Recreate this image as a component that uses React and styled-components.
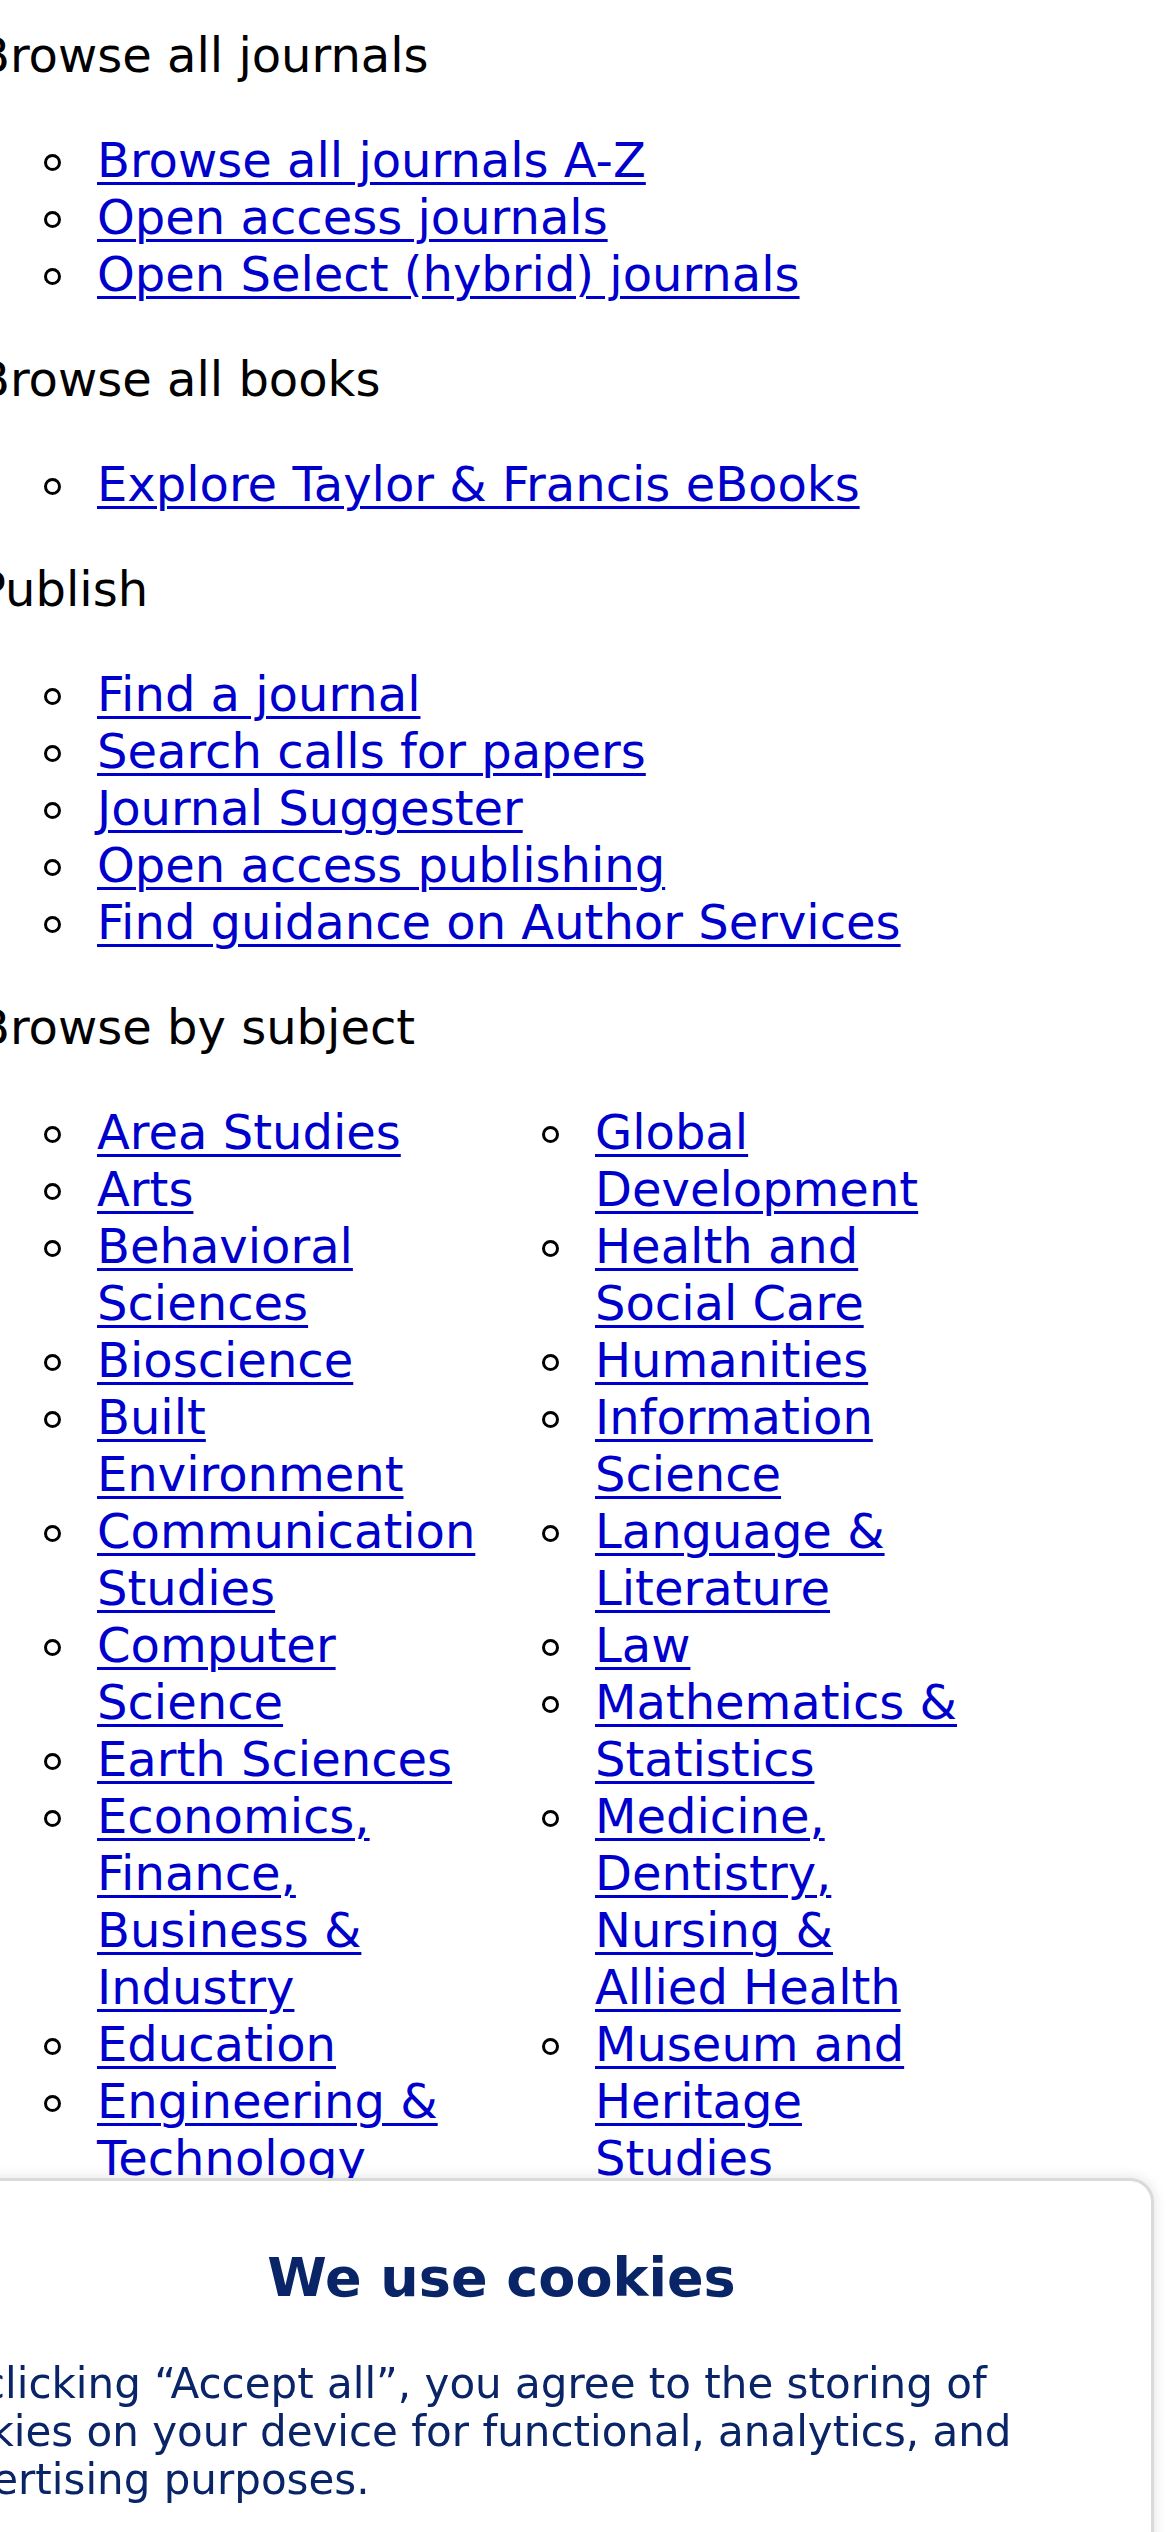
import React from "react";
import styled, { createGlobalStyle } from "styled-components";

const journalLinks = [
  "Browse all journals A-Z",
  "Open access journals",
  "Open Select (hybrid) journals",
];

const bookLinks = ["Explore Taylor & Francis eBooks"];

const publishLinks = [
  "Find a journal",
  "Search calls for papers",
  "Journal Suggester",
  "Open access publishing",
  "Find guidance on Author Services",
];

const subjectsLeft = [
  "Area Studies",
  "Arts",
  "Behavioral Sciences",
  "Bioscience",
  "Built Environment",
  "Communication Studies",
  "Computer Science",
  "Earth Sciences",
  "Economics, Finance, Business & Industry",
  "Education",
  "Engineering & Technology",
  "Environment & Agriculture",
  "Environment and Sustainability",
  "Food Science & Technology",
  "Geography",
];

const subjectsRight = [
  "Global Development",
  "Health and Social Care",
  "Humanities",
  "Information Science",
  "Language & Literature",
  "Law",
  "Mathematics & Statistics",
  "Medicine, Dentistry, Nursing & Allied Health",
  "Museum and Heritage Studies",
  "Physical Sciences",
  "Politics & International Relations",
  "Social Sciences",
  "Sports and Leisure",
  "Tourism, Hospitality and Events",
  "Urban Studies",
];

function App() {
  return (
    <>
      <GlobalStyle />
      <Viewport>
        <Page>
          <Section title="Browse all journals" links={journalLinks} />
          <Section title="Browse all books" links={bookLinks} />
          <Section title="Publish" links={publishLinks} />

          <SectionTitle>Browse by subject</SectionTitle>
          <SubjectColumns>
            <SubjectList>
              {subjectsLeft.map((s) => (
                <Item key={s}>
                  <Link href="#">{s}</Link>
                </Item>
              ))}
            </SubjectList>
            <SubjectList>
              {subjectsRight.map((s) => (
                <Item key={s}>
                  <Link href="#">{s}</Link>
                </Item>
              ))}
            </SubjectList>
          </SubjectColumns>
        </Page>
      </Viewport>

      <CookieBanner>
        <CookieTitle>We use cookies</CookieTitle>
        <CookieText>
          By clicking “Accept all”, you agree to the storing of cookies on your
          device for functional, analytics, and advertising purposes.
        </CookieText>
        <CookieActions>
          <CookieButton primary>Accept all</CookieButton>
          <CookieButton>Essential only</CookieButton>
          <CookieButton>Settings</CookieButton>
        </CookieActions>
      </CookieBanner>
    </>
  );
}

function Section({ title, links }) {
  return (
    <>
      <SectionTitle>{title}</SectionTitle>
      <LinkList>
        {links.map((l) => (
          <Item key={l}>
            <Link href="#">{l}</Link>
          </Item>
        ))}
      </LinkList>
    </>
  );
}

const GlobalStyle = createGlobalStyle`
  html, body {
    margin: 0;
    padding: 0;
    background: #ffffff;
    overflow: hidden;
  }
  body {
    font-family: "DejaVu Sans", "Liberation Sans", sans-serif;
    color: #000000;
  }
`;

const Viewport = styled.div`
  height: 100vh;
  overflow: hidden;
`;

const Page = styled.div`
  margin-left: -23px;
  padding-top: 27px;
  font-size: 48px;
  line-height: 57px;
`;

const SectionTitle = styled.div`
  font-size: 48px;
  line-height: 57px;
  color: #000;
`;

const LinkList = styled.ul`
  margin: 48px 0;
  padding-left: 120px;
  list-style: none;
`;

const SubjectColumns = styled.div`
  display: flex;
  align-items: flex-start;
  gap: 116px;
  margin: 48px 0;
  padding-left: 120px;
`;

const SubjectList = styled.ul`
  width: 382px;
  margin: 0;
  padding: 0;
  list-style: none;
`;

// hollow circle bullet, drawn like the browser's "circle" marker
const Item = styled.li`
  position: relative;
  line-height: 57px;

  &::before {
    content: "";
    position: absolute;
    left: -53px;
    top: 22px;
    width: 17px;
    height: 17px;
    box-sizing: border-box;
    border: 3px solid #000;
    border-radius: 50%;
  }
`;

const Link = styled.a`
  color: #0000cc;
  text-decoration: underline;
  text-decoration-thickness: 3px;
  text-underline-offset: 5px;
`;

const CookieBanner = styled.div`
  position: fixed;
  top: 2178px;
  left: -145px;
  right: 16px;
  bottom: -300px;
  box-sizing: border-box;
  padding: 0 63px 0 57px;
  background: #ffffff;
  border: 3px solid #dadada;
  border-radius: 24px 24px 0 0;
  box-shadow: 0 0 14px rgba(0, 0, 0, 0.12);
  color: #0a2468;
`;

const CookieTitle = styled.h2`
  margin: 65px 0 0;
  font-size: 54px;
  font-weight: bold;
  line-height: normal;
  text-align: center;
  color: #0a2468;
`;

const CookieText = styled.p`
  margin: 51px 0 0;
  font-size: 42px;
  line-height: 48px;
  color: #0a2468;
`;

const CookieActions = styled.div`
  display: flex;
  flex-direction: column;
  gap: 24px;
  margin-top: 48px;
`;

const CookieButton = styled.button`
  font-family: inherit;
  font-size: 42px;
  padding: 24px;
  border-radius: 12px;
  border: 3px solid #0a2468;
  background: ${(p) => (p.primary ? "#0a2468" : "#ffffff")};
  color: ${(p) => (p.primary ? "#ffffff" : "#0a2468")};
`;

export default App;
